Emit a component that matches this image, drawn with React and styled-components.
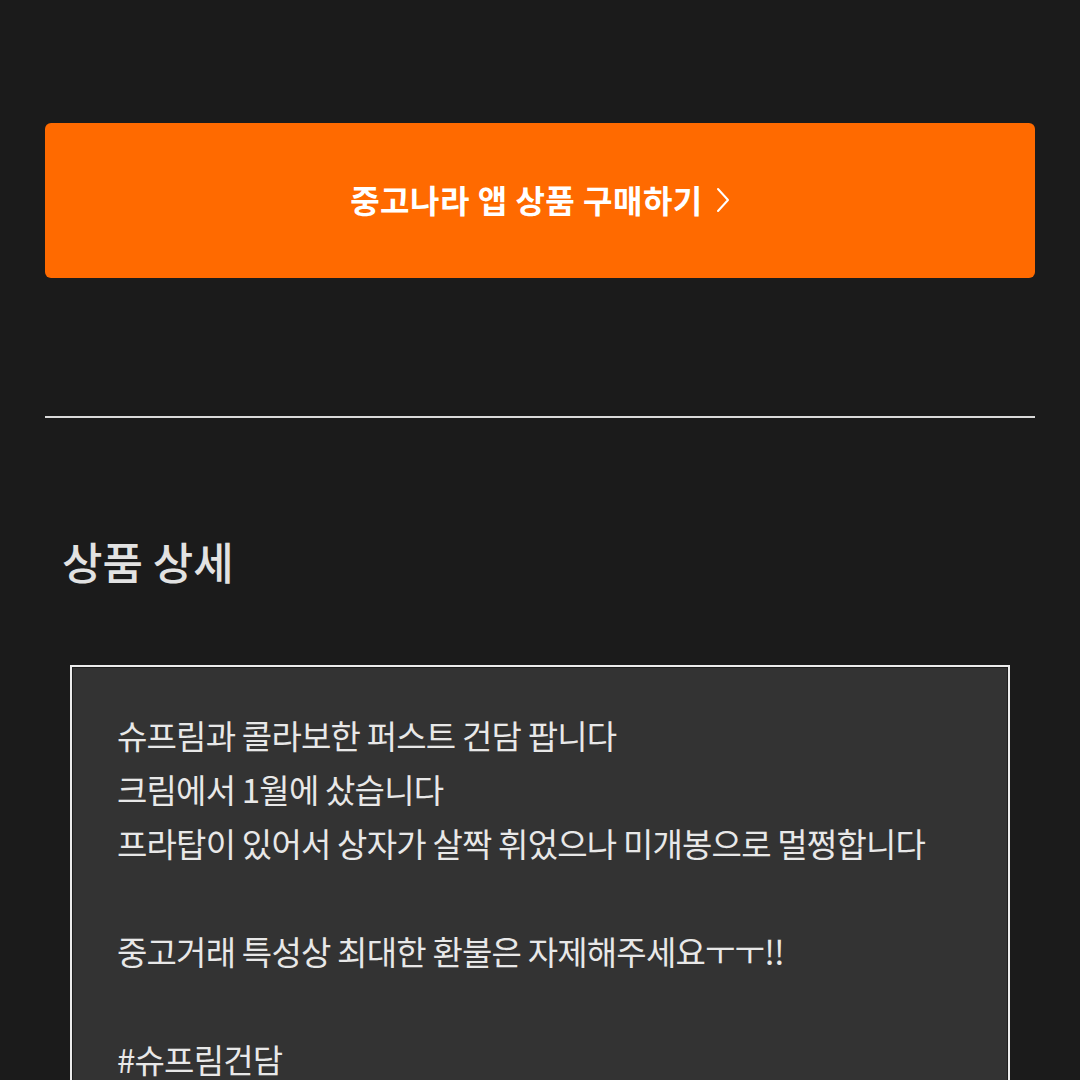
import React from "react";
import styled, { createGlobalStyle } from "styled-components";

const GlobalStyle = createGlobalStyle`
  html, body {
    margin: 0;
    padding: 0;
    background-color: #1b1b1b;
  }
  body {
    font-family: "Noto Sans CJK KR", "Noto Sans", sans-serif;
    color: #e6e6e6;
  }
`;

const Page = styled.div`
  padding: 123px 45px 0;
  min-height: 1080px;
  box-sizing: border-box;
  overflow: hidden;
`;

const BuyButton = styled.button`
  display: flex;
  align-items: center;
  justify-content: center;
  gap: 13px;
  width: 100%;
  height: 155px;
  padding: 0 0 4px;
  border: none;
  border-radius: 6px;
  background-color: #ff6a00;
  color: #fff;
  font-family: inherit;
  font-size: 32px;
  font-weight: 700;
  letter-spacing: 0.5px;
  cursor: pointer;

  & svg {
    width: 14px;
    height: 26px;
    margin-top: 2px;
  }
`;

const Divider = styled.hr`
  margin: 138px 0 0;
  border: none;
  height: 2px;
  background-color: #d9d9d9;
`;

const SectionTitle = styled.h2`
  margin: 114px 0 0 17px;
  font-size: 44px;
  font-weight: 500;
  line-height: 59px;
  color: #e2e2e2;
`;

const DetailBox = styled.div`
  margin: 74px 25px 0;
  padding: 41px 45px 80px;
  border: 2px solid #ececec;
  box-shadow: inset 0 0 0 1px #1e1e1e;
  background-color: #333333;
  font-size: 33px;
  line-height: 54px;
  letter-spacing: -0.8px;
  white-space: pre-line;
  color: #e8e8e8;
`;

const description = `슈프림과 콜라보한 퍼스트 건담 팝니다
크림에서 1월에 샀습니다
프라탑이 있어서 상자가 살짝 휘었으나 미개봉으로 멀쩡합니다

중고거래 특성상 최대한 환불은 자제해주세요ㅜㅜ!!

#슈프림건담`;

function Chevron() {
  return (
    <svg viewBox="0 0 14 26" fill="none" stroke="#fff" strokeWidth="2" strokeLinecap="round" strokeLinejoin="round">
      <path d="M2 2l10 11-10 11" />
    </svg>
  );
}

export default function App() {
  return (
    <>
      <GlobalStyle />
      <Page>
        <BuyButton>
          중고나라 앱 상품 구매하기
          <Chevron />
        </BuyButton>
        <Divider />
        <SectionTitle>상품 상세</SectionTitle>
        <DetailBox>{description}</DetailBox>
      </Page>
    </>
  );
}
